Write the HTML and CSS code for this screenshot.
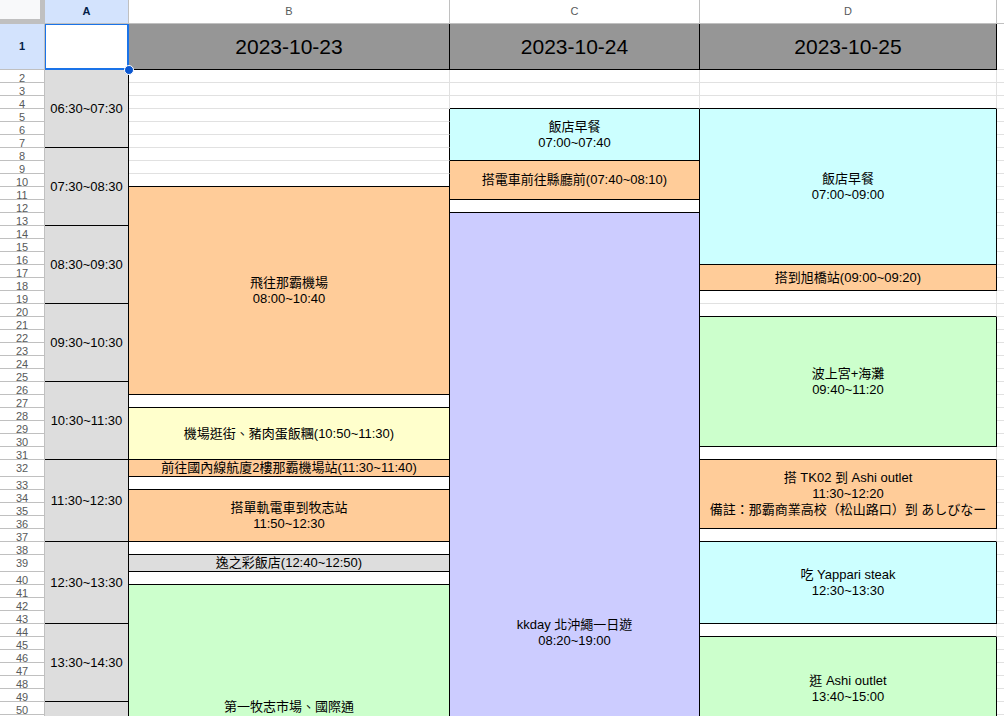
FILE: index.html
```html
<!DOCTYPE html>
<html lang="zh-Hant">
<head>
<meta charset="utf-8">
<title>2023-10 行程表</title>
<link rel="stylesheet" href="styles.css">
</head>
<body>
<main class="viewport">
<table class="sheet">
<colgroup>
<col class="col-index"><col class="col-a"><col class="col-b"><col class="col-c"><col class="col-d"><col>
</colgroup>
<thead>
<tr class="letters"><td class="corner"></td><th class="active" scope="col">A</th><th scope="col">B</th><th scope="col">C</th><th scope="col">D</th><th></th></tr>
</thead>
<tbody>
<tr class="dates"><th class="active" scope="row">1</th><td class="selected"><span class="handle"></span></td><td class="box date">2023-10-23</td><td class="box date">2023-10-24</td><td class="box date">2023-10-25</td><td></td></tr>
<tr><th scope="row"><span>2</span></th><td class="box gray" rowspan="6">06:30~07:30</td><td></td><td></td><td></td><td></td></tr>
<tr><th scope="row"><span>3</span></th><td></td><td></td><td></td><td></td></tr>
<tr><th scope="row"><span>4</span></th><td></td><td class="end"></td><td class="end"></td><td></td></tr>
<tr><th scope="row"><span>5</span></th><td class="side"></td><td class="box cyan" rowspan="4">飯店早餐<br>07:00~07:40</td><td class="box cyan" rowspan="12">飯店早餐<br>07:00~09:00</td><td></td></tr>
<tr><th scope="row"><span>6</span></th><td class="side"></td><td></td></tr>
<tr><th scope="row"><span>7</span></th><td class="side"></td><td></td></tr>
<tr><th scope="row"><span>8</span></th><td class="box gray" rowspan="6">07:30~08:30</td><td class="side"></td><td></td></tr>
<tr><th scope="row"><span>9</span></th><td class="side"></td><td class="box orange" rowspan="3">搭電車前往縣廳前(07:40~08:10)</td><td></td></tr>
<tr><th scope="row"><span>10</span></th><td class="box"></td><td></td></tr>
<tr><th scope="row"><span>11</span></th><td class="box orange" rowspan="16">飛往那霸機場<br>08:00~10:40</td><td></td></tr>
<tr><th scope="row"><span>12</span></th><td class="box"></td><td></td></tr>
<tr><th scope="row"><span>13</span></th><td class="box purple" rowspan="64">kkday 北沖繩一日遊<br>08:20~19:00</td><td></td></tr>
<tr><th scope="row"><span>14</span></th><td class="box gray" rowspan="6">08:30~09:30</td><td></td></tr>
<tr><th scope="row"><span>15</span></th><td></td></tr>
<tr><th scope="row"><span>16</span></th><td></td></tr>
<tr><th scope="row"><span>17</span></th><td class="box orange" rowspan="2">搭到旭橋站(09:00~09:20)</td><td></td></tr>
<tr><th scope="row"><span>18</span></th><td></td></tr>
<tr><th scope="row"><span>19</span></th><td></td><td></td></tr>
<tr><th scope="row"><span>20</span></th><td class="box gray" rowspan="6">09:30~10:30</td><td class="end"></td><td></td></tr>
<tr><th scope="row"><span>21</span></th><td class="box green" rowspan="10">波上宮+海灘<br>09:40~11:20</td><td></td></tr>
<tr><th scope="row"><span>22</span></th><td></td></tr>
<tr><th scope="row"><span>23</span></th><td></td></tr>
<tr><th scope="row"><span>24</span></th><td></td></tr>
<tr><th scope="row"><span>25</span></th><td></td></tr>
<tr><th scope="row"><span>26</span></th><td class="box gray" rowspan="6">10:30~11:30</td><td></td></tr>
<tr><th scope="row"><span>27</span></th><td class="box"></td><td></td></tr>
<tr><th scope="row"><span>28</span></th><td class="box yellow" rowspan="4">機場逛街、豬肉蛋飯糰(10:50~11:30)</td><td></td></tr>
<tr><th scope="row"><span>29</span></th><td></td></tr>
<tr><th scope="row"><span>30</span></th><td></td></tr>
<tr><th scope="row"><span>31</span></th><td class="end"></td><td></td></tr>
<tr class="tall"><th scope="row"><span>32</span></th><td class="box gray" rowspan="6">11:30~12:30</td><td class="box orange">前往國內線航廈2樓那霸機場站(11:30~11:40)</td><td class="box orange" rowspan="5">搭 TK02 到 Ashi outlet<br>11:30~12:20<br>備註：那霸商業高校（松山路口）到 あしびなー</td><td></td></tr>
<tr><th scope="row"><span>33</span></th><td class="box"></td><td></td></tr>
<tr><th scope="row"><span>34</span></th><td class="box orange" rowspan="4">搭單軌電車到牧志站<br>11:50~12:30</td><td></td></tr>
<tr><th scope="row"><span>35</span></th><td></td></tr>
<tr><th scope="row"><span>36</span></th><td></td></tr>
<tr><th scope="row"><span>37</span></th><td class="end"></td><td></td></tr>
<tr><th scope="row"><span>38</span></th><td class="box gray" rowspan="6">12:30~13:30</td><td class="box"></td><td class="box cyan" rowspan="6">吃 Yappari steak<br>12:30~13:30</td><td></td></tr>
<tr class="tall"><th scope="row"><span>39</span></th><td class="box gray">逸之彩飯店(12:40~12:50)</td><td></td></tr>
<tr><th scope="row"><span>40</span></th><td class="box"></td><td></td></tr>
<tr><th scope="row"><span>41</span></th><td class="box green" rowspan="20">第一牧志市場、國際通<br>&nbsp;</td><td></td></tr>
<tr><th scope="row"><span>42</span></th><td></td></tr>
<tr><th scope="row"><span>43</span></th><td></td></tr>
<tr><th scope="row"><span>44</span></th><td class="box gray" rowspan="6">13:30~14:30</td><td class="end"></td><td></td></tr>
<tr><th scope="row"><span>45</span></th><td class="box green" rowspan="8">逛 Ashi outlet<br>13:40~15:00</td><td></td></tr>
<tr><th scope="row"><span>46</span></th><td></td></tr>
<tr><th scope="row"><span>47</span></th><td></td></tr>
<tr><th scope="row"><span>48</span></th><td></td></tr>
<tr><th scope="row"><span>49</span></th><td></td></tr>
<tr><th scope="row"><span>50</span></th><td class="box gray" rowspan="27"></td><td></td></tr>
<tr><th scope="row"></th><td></td></tr>
<tr><th scope="row"></th><td></td></tr>
<tr><th scope="row"></th><td rowspan="24"></td><td></td></tr>
<tr><th scope="row"></th><td></td></tr>
<tr><th scope="row"></th><td></td></tr>
<tr><th scope="row"></th><td></td></tr>
<tr><th scope="row"></th><td></td></tr>
<tr><th scope="row"></th><td></td></tr>
<tr><th scope="row"></th><td></td></tr>
<tr><th scope="row"></th><td></td></tr>
<tr><th scope="row"></th><td class="side" rowspan="16"></td><td></td></tr>
<tr><th scope="row"></th><td></td></tr>
<tr><th scope="row"></th><td></td></tr>
<tr><th scope="row"></th><td></td></tr>
<tr><th scope="row"></th><td></td></tr>
<tr><th scope="row"></th><td></td></tr>
<tr><th scope="row"></th><td></td></tr>
<tr><th scope="row"></th><td></td></tr>
<tr><th scope="row"></th><td></td></tr>
<tr><th scope="row"></th><td></td></tr>
<tr><th scope="row"></th><td></td></tr>
<tr><th scope="row"></th><td></td></tr>
<tr><th scope="row"></th><td></td></tr>
<tr><th scope="row"></th><td></td></tr>
<tr><th scope="row"></th><td></td></tr>
<tr><th scope="row"></th><td></td></tr>
</tbody>
</table>
</main>
</body>
</html>
```
FILE: styles.css
```css
body {
  margin: 0;
  background: #fff;
  color: #000;
  font-family: "Liberation Sans", "Noto Sans CJK TC", sans-serif;
}

.viewport {
  height: 100vh;
  overflow: hidden;
}

.sheet {
  width: 100%;
  table-layout: fixed;
  border-collapse: separate;
  border-spacing: 0;
  font-size: 13px;
  line-height: 16px;
  text-align: center;
}

.col-index { width: 45px; }
.col-a { width: 84px; }
.col-b { width: 321px; }
.col-c { width: 250px; }
.col-d { width: 297px; }

.sheet tr { height: 13px; }
.sheet .letters { height: 24px; }
.sheet .dates { height: 46px; }
.sheet .tall { height: 17px; }

.sheet th,
.sheet td {
  box-sizing: border-box;
  padding: 0;
  border: 0 solid #e1e1e1;
  border-width: 0 1px 1px 0;
  vertical-align: middle;
}

.sheet th {
  border-color: #c0c0c0;
  color: #575a5a;
  font-size: 11px;
  font-weight: 400;
}

/* The last column runs on past the window edge. */
.sheet tr > :last-child { border-right-width: 0; }

.sheet .letters th,
.sheet .dates th { padding-bottom: 2px; }

.sheet th span {
  display: block;
  height: 12px;
}

.sheet .tall th span { height: 16px; }

.sheet th.active {
  background: #d3e3fd;
  color: #041e49;
  font-weight: 700;
}

.sheet .corner {
  border: solid #c0c0c0;
  border-width: 0 5px 5px 0;
  background: #f8f9fa;
}

.sheet .box { border-color: #000; }
.sheet .side { border-right-color: #000; }
.sheet .end { border-bottom-color: #000; }

.sheet .date {
  background: #969696;
  font-size: 21px;
  line-height: 24px;
}

.gray { background: #ddd; }
.cyan { background: #cff; }
.orange { background: #fc9; }
.purple { background: #ccf; }
.green { background: #cfc; }
.yellow { background: #ffc; }

.sheet .selected {
  position: relative;
  border: solid #1a73e8;
  border-width: 1px 2px 2px 1px;
}

.handle {
  position: absolute;
  right: -7px;
  bottom: -7px;
  width: 8px;
  height: 8px;
  border: 1px solid #fff;
  border-radius: 50%;
  background: #0b57d0;
}
```
